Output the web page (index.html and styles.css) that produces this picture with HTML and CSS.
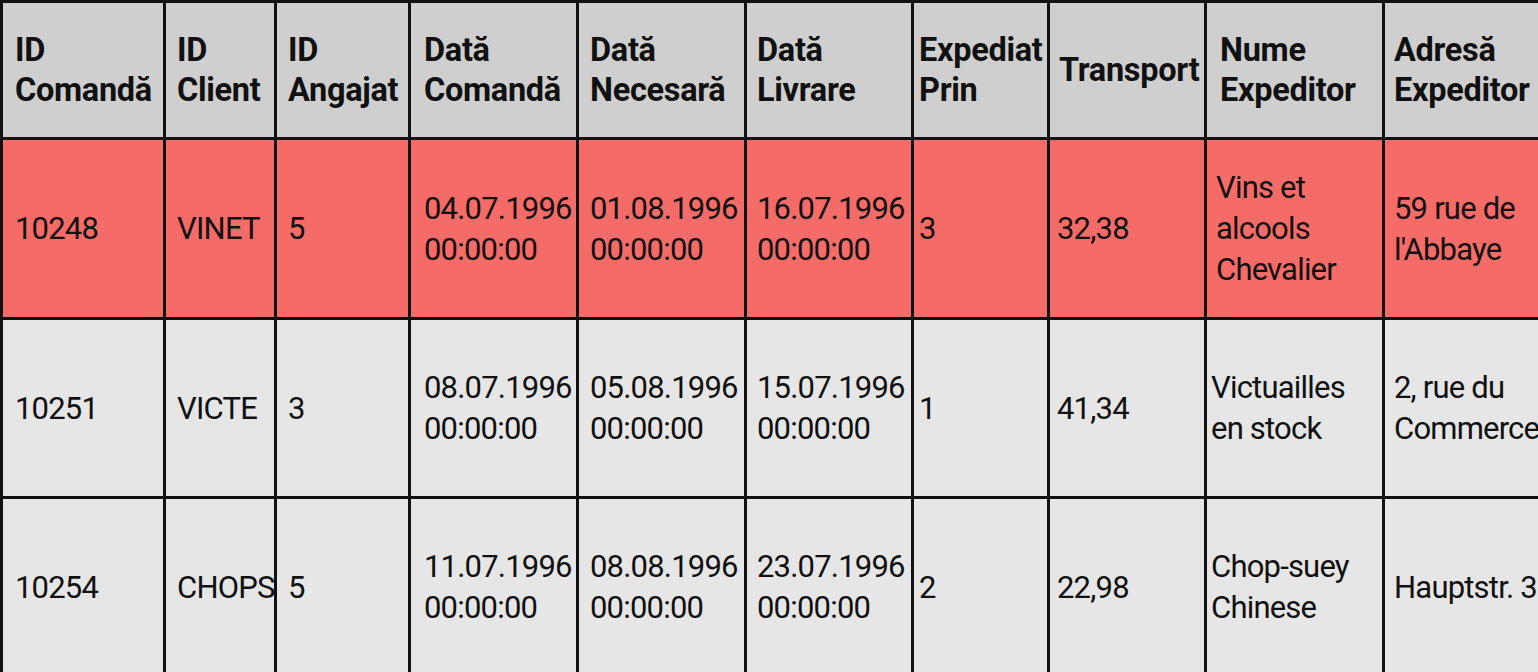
FILE: index.html
```html
<!DOCTYPE html>
<html lang="ro">
<head>
<meta charset="utf-8">
<title>Comenzi</title>
<link rel="stylesheet" href="styles.css">
</head>
<body>
<table class="grid">
  <colgroup>
    <col class="w1"><col class="w2"><col class="w3"><col class="w4"><col class="w5">
    <col class="w6"><col class="w7"><col class="w8"><col class="w9"><col class="w10">
  </colgroup>
  <thead>
    <tr class="head">
      <th class="c1">ID<br>Comandă</th>
      <th class="c2">ID<br>Client</th>
      <th class="c3">ID<br>Angajat</th>
      <th class="c4">Dată<br>Comandă</th>
      <th class="c5">Dată<br>Necesară</th>
      <th class="c6">Dată<br>Livrare</th>
      <th class="c7">Expediat<br>Prin</th>
      <th class="c8 h8">Transport</th>
      <th class="c9 h9">Nume<br>Expeditor</th>
      <th class="c10">Adresă<br>Expeditor</th>
    </tr>
  </thead>
  <tbody>
    <tr class="row hot">
      <td class="c1">10248</td>
      <td class="c2">VINET</td>
      <td class="c3">5</td>
      <td class="c4">04.07.1996<br>00:00:00</td>
      <td class="c5">01.08.1996<br>00:00:00</td>
      <td class="c6">16.07.1996<br>00:00:00</td>
      <td class="c7">3</td>
      <td class="c8">32,38</td>
      <td class="c9 n1">Vins et<br>alcools<br>Chevalier</td>
      <td class="c10">59 rue de<br>l'Abbaye</td>
    </tr>
    <tr class="row">
      <td class="c1">10251</td>
      <td class="c2">VICTE</td>
      <td class="c3">3</td>
      <td class="c4">08.07.1996<br>00:00:00</td>
      <td class="c5">05.08.1996<br>00:00:00</td>
      <td class="c6">15.07.1996<br>00:00:00</td>
      <td class="c7">1</td>
      <td class="c8">41,34</td>
      <td class="c9">Victuailles<br>en stock</td>
      <td class="c10">2, rue du<br>Commerce</td>
    </tr>
    <tr class="row">
      <td class="c1">10254</td>
      <td class="c2">CHOPS</td>
      <td class="c3">5</td>
      <td class="c4">11.07.1996<br>00:00:00</td>
      <td class="c5">08.08.1996<br>00:00:00</td>
      <td class="c6">23.07.1996<br>00:00:00</td>
      <td class="c7">2</td>
      <td class="c8">22,98</td>
      <td class="c9">Chop-suey<br>Chinese</td>
      <td class="c10">Hauptstr. 31</td>
    </tr>
  </tbody>
</table>
</body>
</html>
```

FILE: styles.css
```css
html, body {
  margin: 0;
  padding: 0;
  background: #e6e6e6;
  overflow: hidden;
}

.grid {
  table-layout: fixed;
  border-collapse: separate;
  border-spacing: 0;
  width: 1577px;
  font-family: Roboto, "Liberation Sans", sans-serif;
  font-size: 31px;
  line-height: 41px;
  letter-spacing: -0.8px;
  color: #111;
}

.w1 { width: 166px; }
.w2 { width: 111px; }
.w3 { width: 134px; }
.w4 { width: 168px; }
.w5 { width: 168px; }
.w6 { width: 167px; }
.w7 { width: 136px; }
.w8 { width: 157px; }
.w9 { width: 178px; }
.w10 { width: 192px; }

.grid th,
.grid td {
  box-sizing: border-box;
  border-right: 3px solid #111;
  border-bottom: 3px solid #111;
  padding: 0 2px 0 12px;
  vertical-align: middle;
  text-align: left;
  white-space: nowrap;
  overflow: hidden;
}

.grid .c1 { border-left: 3px solid #111; padding-left: 12px; }
.grid .c2 { padding-left: 11px; }
.grid .c3 { padding-left: 11px; }
.grid .c4 { padding-left: 13px; }
.grid .c5 { padding-left: 11px; }
.grid .c6 { padding-left: 10px; }
.grid .c7 { padding-left: 5px; padding-right: 0; }
.grid .c8 { padding-left: 7px; }
.grid .c9 { padding-left: 4px; }
.grid .c10 { padding-left: 9px; }
.grid .h8 { padding-left: 9px; }
.grid .h9 { padding-left: 13px; }
.grid .n1 { padding-left: 9px; }

.head th {
  height: 140px;
  border-top: 3px solid #111;
  background: #cfcfcf;
  font-size: 32.5px;
  font-weight: 700;
  letter-spacing: -0.3px;
  line-height: 40px;
}

.row td {
  height: 179px;
  background: #e6e6e6;
}

.row.hot td {
  height: 180px;
  background: #f46b68;
}
```
